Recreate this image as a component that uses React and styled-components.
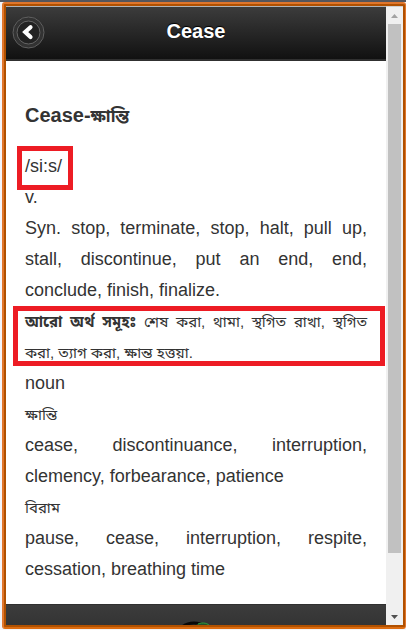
import React from "react";
import styled, { createGlobalStyle } from "styled-components";

const GlobalStyle = createGlobalStyle`
  body {
    margin: 0;
    background: #f4f4f8;
    color: #333;
    font-family: "Liberation Sans", Arial, "Noto Sans Bengali", sans-serif;
  }
`;

const Window = styled.div`
  box-sizing: border-box;
  height: 100vh;
  padding: 2px 0 1px 2px;
  background: linear-gradient(#55555a 2px, transparent 2px);
`;

const Frame = styled.div`
  box-sizing: border-box;
  display: flex;
  height: 100%;
  border: 2px solid #e0762c;
  border-right-width: 1px;
  border-radius: 3px;
  border-bottom-color: #dc6c10;
  background: #b05000;
  padding: 2px;
`;

const Page = styled.div`
  flex: 1;
  min-width: 0;
  display: flex;
  flex-direction: column;
  overflow: hidden;
  background: #fff;
`;

const Header = styled.header`
  box-sizing: border-box;
  flex: none;
  display: grid;
  grid-template-columns: 44px 1fr 44px;
  align-items: center;
  height: 55px;
  border-top: 1px solid #b3b3b3;
  border-bottom: 2px solid #303030;
  background: linear-gradient(#3c3c3c, #111);
`;

const BackButton = styled.button`
  width: 34px;
  height: 34px;
  margin-left: 6px;
  padding: 0;
  border: none;
  background: none;
  cursor: pointer;

  svg {
    display: block;
  }
`;

const Title = styled.h1`
  margin: 0;
  padding-bottom: 4px;
  color: #fff;
  font-size: 20px;
  line-height: 24px;
  text-align: center;
  text-shadow: 0 -1px 1px #000;
`;

const Content = styled.main`
  flex: none;
  padding: 39px 19px 19px;
  font-size: 18px;
  line-height: 31px;
  text-align: justify;
`;

const Word = styled.h2`
  margin: 0 0 20px;
  font-size: 20px;
  line-height: 31px;
`;

const Line = styled.p`
  margin: 0;
`;

const Bangla = styled.span`
  font-size: ${(props) => (props.$large ? "17px" : "15px")};
  line-height: 20px;
`;

const Marked = styled.span`
  position: relative;
  display: ${(props) => (props.$block ? "block" : "inline-block")};

  &::after {
    content: "";
    position: absolute;
    inset: ${(props) => props.$inset};
    border: 5px solid #ed1c24;
    pointer-events: none;
  }
`;

const Footer = styled.footer`
  flex: none;
  display: flex;
  justify-content: center;
  padding: 16px 0;
  border-top: 1px solid #303030;
  background: linear-gradient(#3c3c3c, #222);
`;

const Scrollbar = styled.div`
  flex: none;
  box-sizing: border-box;
  display: flex;
  flex-direction: column;
  width: 17px;
  padding: 0 2px;
  border-top: 1px solid #d0d0d0;
  background: #f0f0f0;
`;

const Arrow = styled.button`
  flex: none;
  width: 13px;
  height: 17px;
  padding: 0;
  border: none;
  background: none;
  color: ${(props) => props.$color};

  svg {
    display: block;
    margin: 0 auto;
  }
`;

const Track = styled.div`
  flex: 1;
`;

const Thumb = styled.div`
  height: 90.5%;
  background: #c1c1c1;
`;

function BackIcon() {
  return (
    <svg width="34" height="34" viewBox="0 0 34 34" fill="none">
      <circle cx="16.5" cy="16.5" r="15.5" fill="#303030" stroke="#606060" />
      <circle cx="16.5" cy="16.5" r="13.5" stroke="#333" strokeWidth="2" />
      <circle cx="16.5" cy="16.5" r="11.5" fill="#222" stroke="#666" />
      <path
        d="M18.5 11.2 13.2 16l5.3 5"
        stroke="#fff"
        strokeWidth="4.2"
        strokeLinecap="round"
      />
    </svg>
  );
}

function Logo() {
  return (
    <svg width="48" height="30" viewBox="0 0 48 30" fill="none">
      <ellipse cx="22" cy="14" rx="16" ry="12" stroke="#080808" strokeWidth="3" />
      <path d="M24 4c4-3 11-3 15 2l-3 5c-2-5-7-6-12-5z" fill="#244d29" />
      <path d="M26 3c5-2 10-1 13 3" stroke="#2f9d3c" strokeWidth="1" />
    </svg>
  );
}

export default function App() {
  return (
    <>
      <GlobalStyle />
      <Window>
        <Frame>
          <Page>
            <Header>
              <BackButton type="button" aria-label="Back">
                <BackIcon />
              </BackButton>
              <Title>Cease</Title>
            </Header>
            <Content>
              <Word>
                Cease-
                <Bangla lang="bn" $large>
                  ক্ষান্তি
                </Bangla>
              </Word>
              <Line>
                <Marked $inset="-5px -11px -8px -8px">/si:s/</Marked>
              </Line>
              <Line>v.</Line>
              <Line>
                Syn. stop, terminate, stop, halt, pull up, stall, discontinue,
                put an end, end, conclude, finish, finalize.
              </Line>
              <Line>
                <Marked $block $inset="0 -18px 2px -12px">
                  <Bangla lang="bn">
                    <b>আরো অর্থ সমূহঃ</b> শেষ করা, থামা, স্থগিত রাখা, স্থগিত
                    করা, ত্যাগ করা, ক্ষান্ত হত্তয়া.
                  </Bangla>
                </Marked>
              </Line>
              <Line>noun</Line>
              <Line>
                <Bangla lang="bn">ক্ষান্তি</Bangla>
              </Line>
              <Line>
                cease, discontinuance, interruption, clemency, forbearance,
                patience
              </Line>
              <Line>
                <Bangla lang="bn">বিরাম</Bangla>
              </Line>
              <Line>
                pause, cease, interruption, respite, cessation, breathing time
              </Line>
            </Content>
            <Footer>
              <Logo />
            </Footer>
          </Page>
          <Scrollbar>
            <Arrow type="button" aria-label="Scroll up" $color="#a3a3a3">
              <svg width="7" height="4" viewBox="0 0 7 4">
                <path d="M0 4 3.5 0 7 4z" fill="currentColor" />
              </svg>
            </Arrow>
            <Track>
              <Thumb />
            </Track>
            <Arrow type="button" aria-label="Scroll down" $color="#505050">
              <svg width="7" height="4" viewBox="0 0 7 4">
                <path d="M0 0h7L3.5 4z" fill="currentColor" />
              </svg>
            </Arrow>
          </Scrollbar>
        </Frame>
      </Window>
    </>
  );
}
